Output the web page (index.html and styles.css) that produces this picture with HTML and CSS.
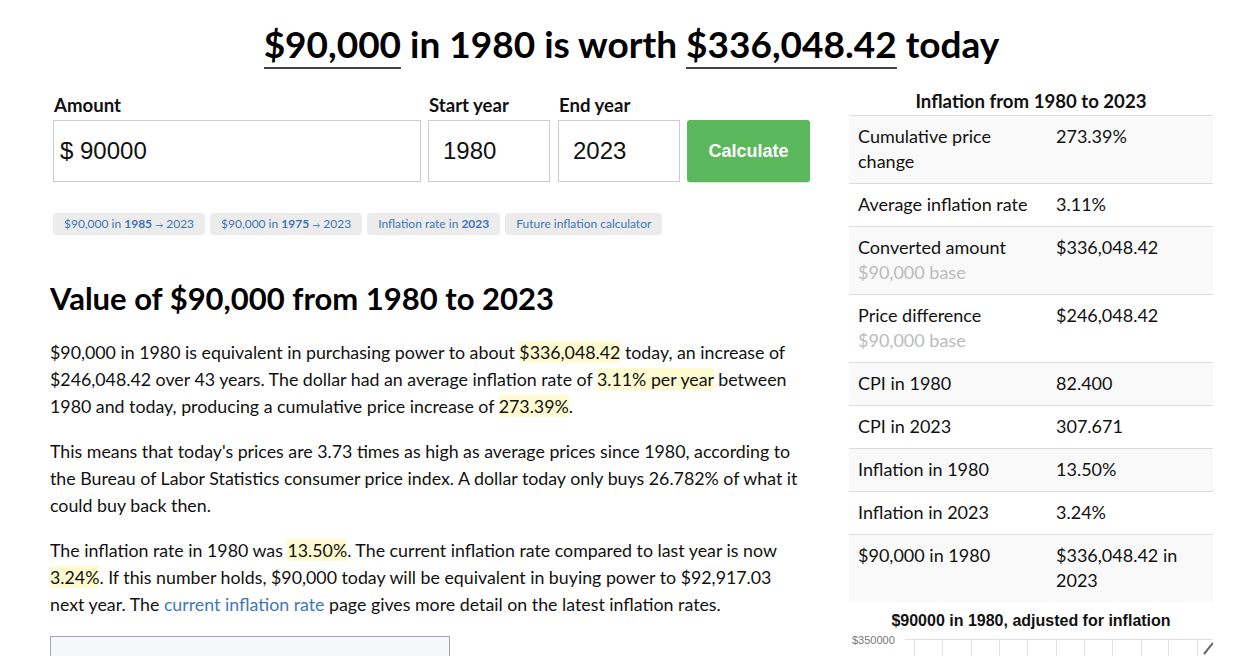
FILE: index.html
```html
<!DOCTYPE html>
<html lang="en">
<head>
<meta charset="utf-8">
<title>$90,000 in 1980 is worth $336,048.42 today</title>
<link rel="stylesheet" href="styles.css">
</head>
<body>
<div class="page">
  <h1 class="title"><span class="u">$90,000</span> in 1980 is worth <span class="u">$336,048.42</span> today</h1>
  <div class="cols">
    <main class="main">
      <form class="calc">
        <div class="field f-amount">
          <label>Amount</label>
          <input class="inp" type="text" value="$ 90000">
        </div>
        <div class="field f-year">
          <label>Start year</label>
          <input class="inp yr" type="text" value="1980">
        </div>
        <div class="field f-year">
          <label>End year</label>
          <input class="inp yr" type="text" value="2023">
        </div>
        <div class="field f-btn">
          <button type="button" class="btn">Calculate</button>
        </div>
      </form>
      <div class="chips">
        <a class="chip" href="#">$90,000 in <b>1985</b> <span class="arr">→</span> 2023</a>
        <a class="chip" href="#">$90,000 in <b>1975</b> <span class="arr">→</span> 2023</a>
        <a class="chip" href="#">Inflation rate in <b>2023</b></a>
        <a class="chip" href="#">Future inflation calculator</a>
      </div>
      <h2 class="h2">Value of $90,000 from 1980 to 2023</h2>
      <p>$90,000 in 1980 is equivalent in purchasing power to about <span class="hl">$336,048.42</span> today, an increase of $246,048.42 over 43 years. The dollar had an average inflation rate of <span class="hl">3.11% per year</span> between 1980 and today, producing a cumulative price increase of <span class="hl">273.39%</span>.</p>
      <p>This means that today's prices are 3.73 times as high as average prices since 1980, according to the Bureau of Labor Statistics consumer price index. A dollar today only buys 26.782% of what it could buy back then.</p>
      <p>The inflation rate in 1980 was <span class="hl">13.50%</span>. The current inflation rate compared to last year is now <span class="hl">3.24%</span>. If this number holds, $90,000 today will be equivalent in buying power to $92,917.03 next year. The <a class="link" href="#">current inflation rate</a> page gives more detail on the latest inflation rates.</p>
      <div class="box"></div>
    </main>
    <aside class="side">
      <div class="side-title">Inflation from 1980 to 2023</div>
      <table class="tbl">
        <tr><td class="c1">Cumulative price change</td><td>273.39%</td></tr>
        <tr><td class="c1">Average inflation rate</td><td>3.11%</td></tr>
        <tr><td class="c1">Converted amount<br><span class="sub">$90,000 base</span></td><td>$336,048.42</td></tr>
        <tr><td class="c1">Price difference<br><span class="sub">$90,000 base</span></td><td>$246,048.42</td></tr>
        <tr><td class="c1">CPI in 1980</td><td>82.400</td></tr>
        <tr><td class="c1">CPI in 2023</td><td>307.671</td></tr>
        <tr><td class="c1">Inflation in 1980</td><td>13.50%</td></tr>
        <tr><td class="c1">Inflation in 2023</td><td>3.24%</td></tr>
        <tr><td class="c1">$90,000 in 1980</td><td>$336,048.42 in 2023</td></tr>
      </table>
      <div class="chart-title">$90000 in 1980, adjusted for inflation</div>
      <div class="chart">
        <span class="ylab">$350000</span>
        <svg class="grid" width="308" height="40" viewBox="0 0 308 40">
          <line x1="0" y1="2.5" x2="308" y2="2.5" stroke="#e0e0e0" stroke-width="1"/>
          <g stroke="#e0e0e0" stroke-width="1">
            <line x1="9.5" y1="2" x2="9.5" y2="40"/>
            <line x1="37.5" y1="2" x2="37.5" y2="40"/>
            <line x1="66.5" y1="2" x2="66.5" y2="40"/>
            <line x1="94.5" y1="2" x2="94.5" y2="40"/>
            <line x1="122.5" y1="2" x2="122.5" y2="40"/>
            <line x1="151.5" y1="2" x2="151.5" y2="40"/>
            <line x1="179.5" y1="2" x2="179.5" y2="40"/>
            <line x1="207.5" y1="2" x2="207.5" y2="40"/>
            <line x1="236.5" y1="2" x2="236.5" y2="40"/>
            <line x1="263.5" y1="2" x2="263.5" y2="40"/>
            <line x1="292.5" y1="2" x2="292.5" y2="40"/>
          </g>
          <line x1="299" y1="17" x2="308" y2="6" stroke="#666" stroke-width="2"/>
        </svg>
      </div>
    </aside>
  </div>
</div>
</body>
</html>
```
FILE: styles.css
```css
* { box-sizing: border-box; }
html, body { margin: 0; padding: 0; background: #fff; }
body {
  font-family: Lato, "Noto Sans", sans-serif;
  color: #111;
  font-size: 17.8px;
}
.page {
  width: 1163px;
  margin-left: 50px;
  padding-top: 20px;
}
.title {
  margin: 0 0 20px 0;
  text-align: center;
  font-size: 37px;
  line-height: 48px;
  font-weight: 700;
  color: #000;
}
.title .u {
  border-bottom: 2px solid #444;
  padding-bottom: 1px;
}
.cols {
  display: flex;
  gap: 39px;
  align-items: flex-start;
}
.main { width: 760px; flex: none; padding-top: 5px; }
.side { width: 364px; flex: none; }

.calc {
  display: flex;
  gap: 7px;
  padding-left: 3px;
}
.field { display: flex; flex-direction: column; }
.field label {
  font-weight: 700;
  font-size: 18.6px;
  line-height: 24px;
  height: 24px;
  margin-bottom: 3px;
  padding-left: 1px;
}
.f-amount { width: 368px; }
.f-year { width: 122px; }
.f-year + .f-year { margin-left: 1px; }
.f-btn { width: 123px; padding-top: 27px; }
.inp {
  height: 62px;
  width: 100%;
  border: 1px solid #ccc;
  border-radius: 0;
  font-family: "Liberation Sans", Arial, sans-serif;
  font-size: 24px;
  color: #111;
  padding: 0 6px;
  margin: 0;
  outline: none;
  background: #fff;
}
.inp.yr { padding-left: 14px; }
.btn {
  height: 62px;
  width: 100%;
  border: 0;
  border-radius: 3px;
  background: #5cb85c;
  color: #fff;
  font-family: "Liberation Sans", Arial, sans-serif;
  font-weight: 700;
  font-size: 18px;
  box-shadow: 0 1px 1px rgba(0,0,0,0.15);
}

.chips {
  display: flex;
  gap: 5px;
  margin-top: 31px;
  padding-left: 3px;
}
.chip {
  display: block;
  height: 22px;
  line-height: 22px;
  padding: 0 11px;
  background: #ececec;
  border-radius: 4px;
  font-size: 12px;
  color: #3d74b4;
  text-decoration: none;
}
.chip b { font-weight: 700; }
.chip .arr { font-size: 8px; }

.h2 {
  margin: 45px 0 23px 0;
  font-size: 31px;
  line-height: 36px;
  font-weight: 700;
  color: #000;
}
p {
  margin: 0 0 18px 0;
  font-size: 17.8px;
  line-height: 27px;
  color: #111;
}
.hl { background: #fdfbcf; }
.link { color: #4277b9; text-decoration: none; }
.box {
  width: 400px;
  height: 60px;
  border: 1px solid #a3a6ac;
  background: #f6f7f9;
}

.side-title {
  text-align: center;
  font-weight: 700;
  font-size: 18.6px;
  line-height: 24px;
  margin-top: 1px;
  margin-bottom: 2px;
}
.tbl {
  width: 364px;
  border-collapse: collapse;
  font-size: 18px;
}
.tbl td {
  padding: 8px 8px 9px 9px;
  line-height: 25px;
  vertical-align: top;
  border-top: 1px solid #ddd;
}
.tbl td.c1 { width: 198px; }
.tbl tr:nth-child(odd) { background: #f9f9f9; }
.sub { color: #bbb; }

.chart-title {
  text-align: center;
  font-family: "Liberation Sans", Arial, sans-serif;
  font-weight: 700;
  font-size: 16px;
  line-height: 20px;
  margin-top: 9px;
  color: #111;
}
.chart {
  display: flex;
  align-items: flex-start;
  margin-top: 2px;
}
.ylab {
  font-family: "Liberation Sans", Arial, sans-serif;
  font-size: 11px;
  color: #777;
  line-height: 14px;
  padding-left: 3px;
  width: 56px;
  flex: none;
}
.grid { display: block; margin-top: 4px; }
```
